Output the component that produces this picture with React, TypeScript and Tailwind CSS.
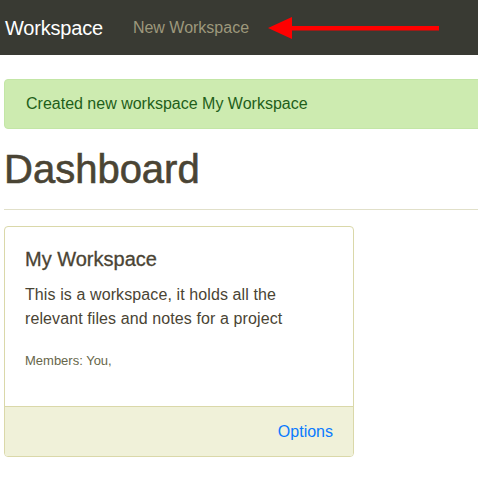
import React from "react";

export default function App() {
  return (
    <div className="w-[478px] h-[478px] overflow-hidden bg-white" style={{ fontFamily: '"Liberation Sans", Arial, sans-serif' }}>
      <nav className="h-[55px] bg-[#393a33] flex items-center pl-[5px]">
        <span className="text-[20px] text-white leading-none tracking-[-0.2px]">Workspace</span>
        <span className="ml-[30px] text-[16px] text-[#9d987c] leading-none">New Workspace</span>
        <svg className="ml-[19px]" width="172" height="26" viewBox="0 0 172 26">
          <polygon points="0,13 24,2 24,24" fill="#ff0000" />
          <rect x="22" y="11" width="149" height="4.5" fill="#ff0000" />
        </svg>
      </nav>
      <div className="pl-[4px]">
        <div className="mt-[24px] h-[50px] flex items-center pl-[21px] bg-[#cdebb0] border border-[#c3e6a6] rounded-l-[4px] text-[16px] text-[#1f5f1a] w-[500px]">
          Created new workspace My Workspace
        </div>
        <h1 className="mt-[16px] text-[40px] leading-[48px] font-medium text-[#4a4434]" style={{ WebkitTextStroke: "0.6px #4a4434" }}>Dashboard</h1>
        <div className="mt-[16px] h-px bg-[#e1e0c9] w-[500px]" />
        <div className="mt-[16px] w-[350px] h-[231px] border border-[#dad8a9] rounded-[4px] flex flex-col overflow-hidden">
          <div className="flex-1 px-[20px] pt-[20px]">
            <div className="text-[20px] leading-[24px] font-medium text-[#4a4434]" style={{ WebkitTextStroke: "0.3px #4a4434" }}>My Workspace</div>
            <p className="mt-[12px] text-[16px] leading-[24px] text-[#4a4434] tracking-[0.1px]">
              This is a workspace, it holds all the relevant files and notes for a project
            </p>
            <p className="mt-[20px] text-[13px] leading-[20px] text-[#67664a]">Members: You,</p>
          </div>
          <div className="h-[50px] bg-[#f0f1d9] border-t border-[#dad8a9] flex items-center justify-end pr-[20px]">
            <span className="text-[16px] text-[#0a7bff]">Options</span>
          </div>
        </div>
      </div>
    </div>
  );
}
